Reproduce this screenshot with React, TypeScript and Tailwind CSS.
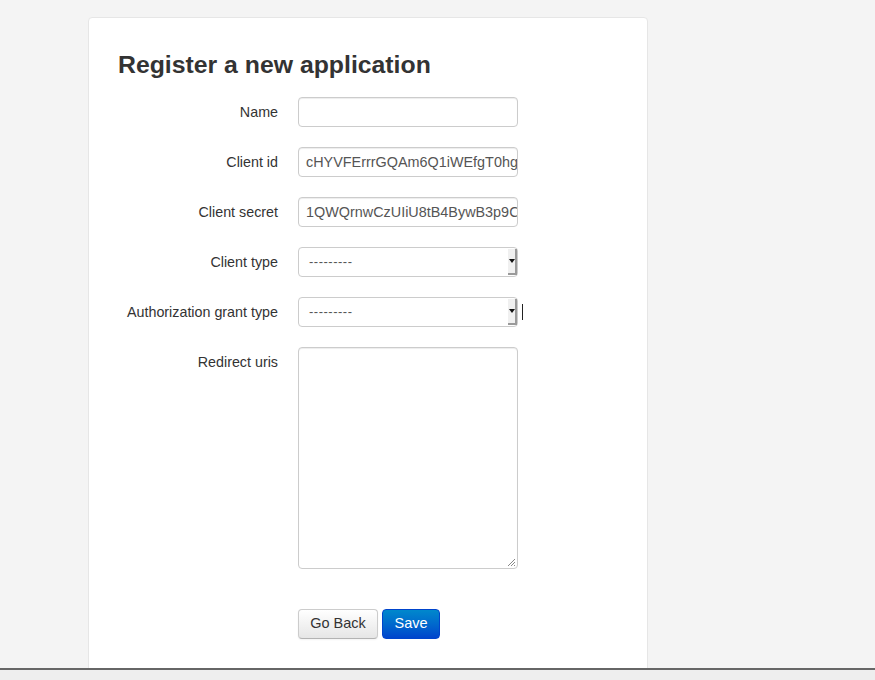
import React from 'react';

const font = { fontFamily: '"Liberation Sans", Arial, Helvetica, sans-serif' };

const Label: React.FC<{ text: string }> = ({ text }) => (
  <label className="w-[160px] shrink-0 pt-[5px] text-right text-[14.3px] leading-[20px] text-[#333]">
    {text}
  </label>
);

const TextInput: React.FC<{ value?: string }> = ({ value }) => (
  <div className="h-[30px] w-[220px] overflow-hidden whitespace-nowrap rounded-[4px] border border-[#ccc] bg-white pl-[7px] py-[4px] text-[14.4px] leading-[20px] text-[#555] shadow-[inset_0_1px_1px_rgba(0,0,0,0.075)]">
    {value}
  </div>
);

const Select: React.FC<{ cursor?: boolean }> = ({ cursor }) => (
  <div className="flex items-center">
    <div className="flex h-[30px] w-[220px] items-stretch rounded-[4px] border border-[#ccc] bg-white">
      <div className="flex flex-1 items-center pl-[10px] text-[13px] tracking-[0.5px] text-[#555]">---------</div>
      <div className="my-[1px] flex w-[9px] items-center justify-center border-r-[2px] border-b-[2px] border-r-[#9a9a9a] border-b-[#9a9a9a] bg-[#f0f0f0]">
        <div className="h-0 w-0 border-x-[3px] border-t-[4px] border-x-transparent border-t-[#111]" />
      </div>
    </div>
    {cursor && <div className="ml-[4px] h-[16px] w-[1px] bg-[#222]" />}
  </div>
);

const Row: React.FC<{ label: string; children: React.ReactNode }> = ({ label, children }) => (
  <div className="mb-[20px] flex">
    <Label text={label} />
    <div className="ml-[20px]">{children}</div>
  </div>
);

export default function App() {
  return (
    <div className="flex h-[680px] flex-col overflow-hidden bg-[#f4f4f4]" style={font}>
      <div className="flex-1 overflow-hidden">
        <div className="ml-[88px] mt-[17px] h-[700px] w-[560px] rounded-[4px] border border-[#e6e6e6] bg-white pl-[29px] pt-[17px]">
          <h3 className="mb-[12px] mt-[10px] text-[24.8px] font-bold leading-[40px] text-[#333]">
            Register a new application
          </h3>
          <Row label="Name">
            <TextInput />
          </Row>
          <Row label="Client id">
            <TextInput value="cHYVFErrrGQAm6Q1iWEfgT0hg" />
          </Row>
          <Row label="Client secret">
            <TextInput value="1QWQrnwCzUIiU8tB4BywB3p9C" />
          </Row>
          <Row label="Client type">
            <Select />
          </Row>
          <Row label="Authorization grant type">
            <Select cursor />
          </Row>
          <Row label="Redirect uris">
            <div className="relative h-[222px] w-[220px] rounded-[4px] border border-[#ccc] bg-white shadow-[inset_0_1px_1px_rgba(0,0,0,0.075)]">
              <svg className="absolute bottom-[1px] right-[1px]" width="9" height="9" viewBox="0 0 9 9">
                <path d="M8 1L1 8M8 4L4 8M8 7L7 8" stroke="#888" strokeWidth="1" />
              </svg>
            </div>
          </Row>
          <div className="ml-[180px] mt-[40px] flex gap-[4px]">
            <button className="h-[30px] w-[80px] rounded-[4px] border border-[#ccc] border-b-[#b3b3b3] bg-gradient-to-b from-white to-[#e6e6e6] text-[14.5px] text-[#333] shadow-[inset_0_1px_0_rgba(255,255,255,0.2),0_1px_2px_rgba(0,0,0,0.05)]">
              Go Back
            </button>
            <button className="h-[30px] w-[58px] rounded-[4px] border border-[#0044cc] bg-gradient-to-b from-[#0088cc] to-[#0044cc] text-[14.5px] text-white">
              Save
            </button>
          </div>
        </div>
      </div>
      <div className="h-[12px] border-t-[2px] border-[#666] bg-[#eee]" />
    </div>
  );
}
